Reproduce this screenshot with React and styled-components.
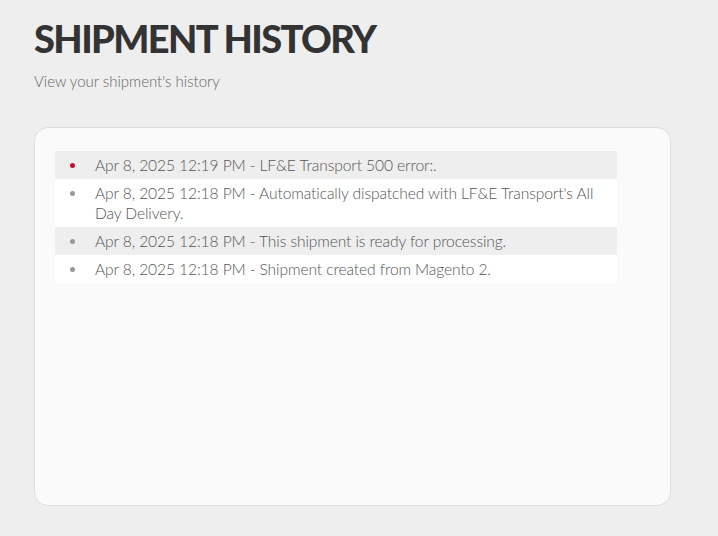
import React from "react";
import styled, { createGlobalStyle } from "styled-components";

const events = [
  { date: "Apr 8, 2025 12:19 PM", text: "LF&E Transport 500 error:.", error: true },
  {
    date: "Apr 8, 2025 12:18 PM",
    text: "Automatically dispatched with LF&E Transport's All Day Delivery.",
  },
  { date: "Apr 8, 2025 12:18 PM", text: "This shipment is ready for processing." },
  { date: "Apr 8, 2025 12:18 PM", text: "Shipment created from Magento 2." },
];

const App = () => {
  return (
    <>
      <GlobalStyle />
      <Page>
        <Title>SHIPMENT HISTORY</Title>
        <Subtitle>View your shipment's history</Subtitle>
        <Card>
          <HistoryList>
            {events.map((ev, i) => (
              <HistoryItem key={i} $striped={i % 2 === 0}>
                <Dot $error={ev.error} />
                <ItemText>{`${ev.date} - ${ev.text}`}</ItemText>
              </HistoryItem>
            ))}
          </HistoryList>
        </Card>
      </Page>
    </>
  );
};

const GlobalStyle = createGlobalStyle`
  html, body {
    margin: 0;
    padding: 0;
    background: #eeeeee;
  }
  body {
    font-family: Lato, "Liberation Sans", sans-serif;
  }
`;

const Page = styled.div`
  padding: 16px 47px 30px 34px;
  min-height: 536px;
  box-sizing: border-box;
`;

const Title = styled.h1`
  margin: 0;
  font-size: 38px;
  line-height: 44px;
  font-weight: 900;
  color: #333333;
  letter-spacing: -1.6px;
`;

const Subtitle = styled.p`
  margin: 11px 0 0;
  font-size: 15px;
  line-height: 20px;
  font-weight: 300;
  color: #666666;
`;

const Card = styled.div`
  margin-top: 36px;
  height: 379px;
  box-sizing: border-box;
  background: #fafafa;
  border: 1px solid #dddddd;
  border-radius: 14px;
  padding: 23px 20px;
`;

const HistoryList = styled.ul`
  list-style: none;
  margin: 0;
  padding: 0;
  width: 562px;
`;

const HistoryItem = styled.li`
  display: flex;
  align-items: flex-start;
  padding: 4px 10px 4px 0;
  background: ${(p) => (p.$striped ? "#eeeeee" : "#ffffff")};
`;

const Dot = styled.span`
  flex: none;
  width: 5px;
  height: 5px;
  border-radius: 50%;
  margin: 8px 20px 0 15px;
  background: ${(p) => (p.$error ? "#c8102e" : "#999999")};
`;

const ItemText = styled.span`
  font-size: 15.6px;
  line-height: 20px;
  font-weight: 300;
  letter-spacing: -0.1px;
  color: #555555;
`;

export default App;
